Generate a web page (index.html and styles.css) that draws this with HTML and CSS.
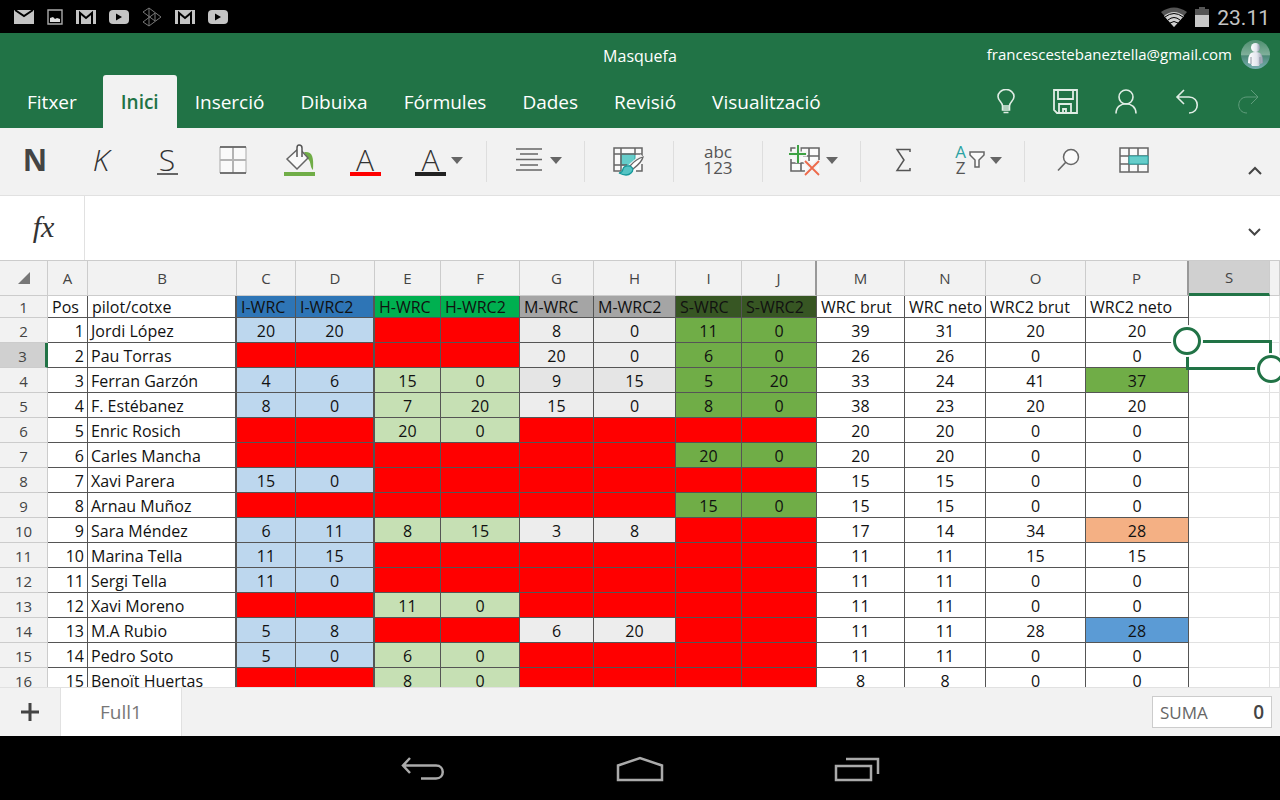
FILE: index.html
```html
<!DOCTYPE html>
<html lang="ca">
<head>
<meta charset="utf-8">
<meta name="viewport" content="width=device-width, initial-scale=1">
<title>Masquefa</title>
<link rel="stylesheet" href="styles.css">
</head>
<body>
<div class="status">
  <div class="notices">
    <svg width="20" height="16" viewBox="0 0 20 16"><path fill="#c4c4c4" d="M0 1h20v14H0z"/><path d="M1 1l9 6 9-6" fill="none" stroke="#000" stroke-width="2"/></svg>
    <svg width="16" height="16" viewBox="0 0 16 16"><path d="M1 1h14v14H1z" fill="none" stroke="#aaa" stroke-width="1.4"/><path d="M3 13V9l3-1 2 2 2-1 3 1v3z" fill="#ddd"/></svg>
    <svg width="20" height="16" viewBox="0 0 20 16"><path fill="#c4c4c4" d="M0 1h20v14H0z"/><path d="M4 15V4l6 5 6-5v11" fill="none" stroke="#000" stroke-width="2"/></svg>
    <svg width="20" height="16" viewBox="0 0 20 16"><rect y="1" width="20" height="14" rx="4" fill="#c4c4c4"/><path d="M7 4.500l6 3.500-6 3.500z" fill="#000"/></svg>
    <svg width="20" height="20" viewBox="0 0 20 20"><path d="M1 5l6-4 12 9-12 9-6-4 12-9v8L1 5M7 1v18" fill="none" stroke="#777"/></svg>
    <svg width="20" height="16" viewBox="0 0 20 16"><path fill="#c4c4c4" d="M0 1h20v14H0z"/><path d="M4 15V4l6 5 6-5v11" fill="none" stroke="#000" stroke-width="2"/></svg>
    <svg width="20" height="16" viewBox="0 0 20 16"><rect y="1" width="20" height="14" rx="4" fill="#c4c4c4"/><path d="M7 4.500l6 3.500-6 3.500z" fill="#000"/></svg>
  </div>
  <div class="system">
    <svg width="26" height="20" viewBox="0 0 26 20"><path d="M0 5Q13-4 26 5L13 20z" fill="#555"/><path d="M3 9Q13 1 23 9L13 20z" fill="#d0d0d0"/><path d="M4 10q9-7 18 0M7 13q6-5 12 0M9 16q4-3 8 0" fill="none" stroke="#000" stroke-width="1"/></svg>
    <svg width="14" height="20" viewBox="0 0 14 20"><path d="M0 2h4V0h6v2h4v7H0z" fill="#555"/><path d="M0 8h14v12H0z" fill="#c8c8c8"/></svg>
    <span class="clock">23.11</span>
  </div>
</div>

<header class="header">
  <div class="title-row">
    <h1 class="title">Masquefa</h1>
    <div class="account"><span>francescestebaneztella@gmail.com</span>
      <svg width="29" height="29" viewBox="0 0 29 29"><defs><linearGradient id="sky" x2="0" y2="1"><stop stop-color="#4f8f70"/><stop offset=".5" stop-color="#7faf9a"/><stop offset=".55" stop-color="#4d8a78"/><stop offset="1" stop-color="#79aeb2"/></linearGradient><linearGradient id="body"><stop stop-color="#fff"/><stop offset=".6" stop-color="#e3e6ee"/><stop offset="1" stop-color="#8d95a8"/></linearGradient></defs><circle cx="14.500" cy="14.500" r="14.500" fill="url(#sky)"/><circle cx="14.500" cy="7.500" r="4.500" fill="url(#body)"/><path d="M10 13q4.500-2 9 0 3 2 3 10l-3 1-1 2h-7l-1-2-3-1q0-8 3-10z" fill="url(#body)"/><path d="M10 17v7M19 17v7" stroke="#8b93a0"/></svg>
    </div>
  </div>
  <div class="tab-row">
    <nav class="tabs">
      <button class="tab file">Fitxer</button><button class="tab active">Inici</button><button class="tab">Inserció</button><button class="tab">Dibuixa</button><button class="tab">Fórmules</button><button class="tab">Dades</button><button class="tab">Revisió</button><button class="tab">Visualització</button>
    </nav>
    <div class="quick">
      <button aria-label="Ajuda"><svg width="26" height="26" viewBox="0 0 26 26"><path d="M10.500 17c0-4-4.500-5-4.500-9.500a8 7 0 0 1 16 0c0 4.500-4.500 5.500-4.500 9.500zM10.500 17v4h7v-4M10.500 19h7M11.500 23.500h5"/></svg></button>
      <button aria-label="Desa"><svg width="26" height="26" viewBox="0 0 26 26"><path d="M1 1h23v23H4l-3-3zM5 1v9h15V1M6 24v-9h12v9M10 24v-4h3v4" stroke-width="1.800"/></svg></button>
      <button aria-label="Comparteix"><svg width="26" height="26" viewBox="0 0 26 26"><circle cx="12" cy="8" r="7"/><path d="M2 24.500c0-13 20-13 20 0"/></svg></button>
      <button aria-label="Desfés"><svg width="26" height="26" viewBox="0 0 26 26"><path d="M9 1L2 8l7 7M2 8h12c11 0 11 16 0 16"/></svg></button>
      <button aria-label="Refés" disabled><svg width="26" height="26" viewBox="0 0 26 26"><path d="M15 1l7 7-7 7M22 8H11c-11 0-11 16 0 16"/></svg></button>
    </div>
  </div>
</header>

<div class="ribbon">
  <button class="tool"><b class="letter bold">N</b></button>
  <button class="tool"><i class="letter">K</i></button>
  <button class="tool"><span class="letter under">S</span></button>
  <button class="tool" aria-label="Vores"><svg width="28" height="28" viewBox="0 0 28 28"><path d="M1 1h26v26H1z" fill="#fafafa" stroke="#aaa"/><path d="M14 1v26M1 14h26" stroke="#b4b4b4" stroke-width="2"/><path d="M1 1h26M1 27h26" stroke="#555" stroke-width="1.500"/></svg></button>
  <button class="tool" aria-label="Color d'emplenament"><svg width="31" height="32" viewBox="0 0 31 32"><path d="M20 8c8-1 10 4 9 18-3-2-2-9-5-11z" fill="#70ad47"/><path d="M3 15L15 4l9 10-11 11z" fill="#fafafa" stroke="#666" stroke-width="1.500"/><path d="M13 13V4q0-3 2-3 3 0 3 3v9" fill="#fafafa" stroke="#555" stroke-width="1.500"/><path d="M0 28h31v4H0z" fill="#70ad47"/></svg></button>
  <button class="tool"><span class="letter colored red">A</span></button>
  <button class="tool split font"><span class="letter colored">A</span><svg class="caret" width="12" height="7"><path d="M0 0h12L6 7z"/></svg></button>
  <span class="sep"></span>
  <button class="tool split wide" aria-label="Alineació"><svg width="32" height="26" viewBox="0 0 32 26"><path d="M3 2h26M7 7h18M3 12.500h26M7 18h18M3 23h26" stroke="#666" stroke-width="1.600"/></svg><svg class="caret" width="12" height="7"><path d="M0 0h12L6 7z"/></svg></button>
  <span class="sep"></span>
  <button class="tool single" aria-label="Estils"><svg width="32" height="32" viewBox="0 0 32 32"><path d="M1 4h28v23H1z" fill="#fafafa"/><path d="M8 10h14v11H8z" fill="#65cdca" stroke="#2ba3a3"/><path d="M29 12V4H1v23h7M8 4v23M22 4v7M1 10h28M1 21h13M23 27h6v-7" fill="none" stroke="#666" stroke-width="1.500"/><path d="M30 13L16 25" stroke="#f2f2f2" stroke-width="7"/><path d="M30 13q-1 5-10 12l-3-3Q23 15 30 13z" fill="#fff" stroke="#666" stroke-width="1.300"/><path d="M17 22q-6-1-7 3-1 4-4 4 8 4 12 0 4-4-1-7z" fill="#55c4c4" stroke="#16999b" stroke-width="1.300"/></svg></button>
  <span class="sep"></span>
  <button class="tool single stack"><span>abc</span><span>123</span></button>
  <span class="sep"></span>
  <button class="tool split wide" aria-label="Insereix i suprimeix"><svg width="32" height="32" viewBox="0 0 32 32"><path d="M2 4h28v23H2z" fill="#fafafa"/><path d="M2 9V4h28v12M2 15v12h14M20 4v13M12 4v5M14 12h16M2 19h14M12 19v8" fill="none" stroke="#666" stroke-width="1.600"/><path d="M0 10h18M9 1v18" stroke="#f2f2f2" stroke-width="5"/><path d="M16 17l14 14M30 17L16 31" stroke="#f2f2f2" stroke-width="5"/><path d="M0 10h17M9 1v18" stroke="#3da243" stroke-width="2"/><path d="M16 17l14 14M30 17L16 31" stroke="#ed6a4b" stroke-width="1.800"/></svg><svg class="caret" width="12" height="7"><path d="M0 0h12L6 7z"/></svg></button>
  <span class="sep"></span>
  <button class="tool sum" aria-label="Suma automàtica"><svg width="16" height="24" viewBox="0 0 16 24"><path d="M15 4V1.500H2L9 12 2 22.500h13V20" fill="none" stroke="#555" stroke-width="1.500"/></svg></button>
  <button class="tool split sort"><span class="az"><em>A</em><span>Z</span></span><svg width="16" height="18" viewBox="0 0 16 18"><path d="M1 1h14v3l-5 5v7H6V9L1 4z" fill="#fafafa" stroke="#666" stroke-width="1.500"/></svg><svg class="caret" width="12" height="7"><path d="M0 0h12L6 7z"/></svg></button>
  <span class="sep"></span>
  <button class="tool find" aria-label="Cerca"><svg width="24" height="24" viewBox="0 0 24 24"><circle cx="15" cy="9" r="7.500" fill="#fafafa" stroke="#666" stroke-width="1.500"/><path d="M10 14l-8 8.500" stroke="#666" stroke-width="1.600"/></svg></button>
  <button class="tool cells" aria-label="Cel·les"><svg width="30" height="26" viewBox="0 0 30 26"><path d="M1 1h28v24H1z" fill="#fafafa"/><path d="M1 1h28v24H1zM10 1v24M19 1v24M1 9h28M1 17h28" fill="none" stroke="#666" stroke-width="1.500"/><path d="M10 9h19v8H10z" fill="#65cdca" stroke="#2ba3a3"/></svg></button>
  <button class="collapse" aria-label="Redueix"><svg width="14" height="9" viewBox="0 0 14 9"><path d="M1 8l6-6 6 6" fill="none" stroke="#444" stroke-width="2"/></svg></button>
</div>

<div class="formula">
  <label class="fx" for="formula">fx</label>
  <input id="formula" type="text">
  <button class="expand" aria-label="Expandeix"><svg width="13" height="8" viewBox="0 0 13 8"><path d="M1 1l5.500 5.500L12 1" fill="none" stroke="#444" stroke-width="2"/></svg></button>
</div>

<main class="sheet">
<table class="grid">
<colgroup><col class="w48"><col class="w40"><col class="w149"><col class="w59"><col class="w79"><col class="w66"><col class="w79"><col class="w74"><col class="w82"><col class="w66"><col class="w75"><col class="w88"><col class="w81"><col class="w100"><col class="w103"><col class="w81"><col></colgroup>
<thead><tr><th><svg width="12" height="12"><path d="M12 0v12H0z" fill="#777"/></svg></th><th>A</th><th>B</th><th>C</th><th>D</th><th>E</th><th>F</th><th>G</th><th>H</th><th>I</th><th class="hidden-after">J</th><th>M</th><th>N</th><th>O</th><th class="hidden-after">P</th><th class="current">S</th><th></th></tr></thead>
<tbody>
<tr class="names"><th>1</th><td>Pos</td><td>pilot/cotxe</td><td>I-WRC</td><td>I-WRC2</td><td>H-WRC</td><td>H-WRC2</td><td>M-WRC</td><td>M-WRC2</td><td>S-WRC</td><td>S-WRC2</td><td>WRC brut</td><td>WRC neto</td><td>WRC2 brut</td><td>WRC2 neto</td><td></td><td></td></tr>
<tr><th>2</th><td>1</td><td>Jordi López</td><td>20</td><td>20</td><td></td><td></td><td>8</td><td>0</td><td>11</td><td>0</td><td>39</td><td>31</td><td>20</td><td>20</td><td></td><td></td></tr>
<tr><th class="current">3</th><td>2</td><td>Pau Torras</td><td></td><td></td><td></td><td></td><td>20</td><td>0</td><td>6</td><td>0</td><td>26</td><td>26</td><td>0</td><td>0</td><td class="selected"><div class="selection"><i class="handle start"></i><i class="handle end"></i></div></td><td></td></tr>
<tr><th>4</th><td>3</td><td>Ferran Garzón</td><td>4</td><td>6</td><td>15</td><td>0</td><td class="shade">9</td><td class="shade">15</td><td>5</td><td>20</td><td>33</td><td>24</td><td>41</td><td class="first">37</td><td></td><td></td></tr>
<tr><th>5</th><td>4</td><td>F. Estébanez</td><td>8</td><td>0</td><td>7</td><td>20</td><td>15</td><td>0</td><td>8</td><td>0</td><td>38</td><td>23</td><td>20</td><td>20</td><td></td><td></td></tr>
<tr><th>6</th><td>5</td><td>Enric Rosich</td><td></td><td></td><td>20</td><td>0</td><td></td><td></td><td></td><td></td><td>20</td><td>20</td><td>0</td><td>0</td><td></td><td></td></tr>
<tr><th>7</th><td>6</td><td>Carles Mancha</td><td></td><td></td><td></td><td></td><td></td><td></td><td>20</td><td>0</td><td>20</td><td>20</td><td>0</td><td>0</td><td></td><td></td></tr>
<tr><th>8</th><td>7</td><td>Xavi Parera</td><td>15</td><td>0</td><td></td><td></td><td></td><td></td><td></td><td></td><td>15</td><td>15</td><td>0</td><td>0</td><td></td><td></td></tr>
<tr><th>9</th><td>8</td><td>Arnau Muñoz</td><td></td><td></td><td></td><td></td><td></td><td></td><td>15</td><td>0</td><td>15</td><td>15</td><td>0</td><td>0</td><td></td><td></td></tr>
<tr><th>10</th><td>9</td><td>Sara Méndez</td><td>6</td><td>11</td><td>8</td><td>15</td><td>3</td><td>8</td><td></td><td></td><td>17</td><td>14</td><td>34</td><td class="third">28</td><td></td><td></td></tr>
<tr><th>11</th><td>10</td><td>Marina Tella</td><td>11</td><td>15</td><td></td><td></td><td></td><td></td><td></td><td></td><td>11</td><td>11</td><td>15</td><td>15</td><td></td><td></td></tr>
<tr><th>12</th><td>11</td><td>Sergi Tella</td><td>11</td><td>0</td><td></td><td></td><td></td><td></td><td></td><td></td><td>11</td><td>11</td><td>0</td><td>0</td><td></td><td></td></tr>
<tr><th>13</th><td>12</td><td>Xavi Moreno</td><td></td><td></td><td>11</td><td>0</td><td></td><td></td><td></td><td></td><td>11</td><td>11</td><td>0</td><td>0</td><td></td><td></td></tr>
<tr><th>14</th><td>13</td><td>M.A Rubio</td><td>5</td><td>8</td><td></td><td></td><td>6</td><td>20</td><td></td><td></td><td>11</td><td>11</td><td>28</td><td class="second">28</td><td></td><td></td></tr>
<tr><th>15</th><td>14</td><td>Pedro Soto</td><td>5</td><td>0</td><td>6</td><td>0</td><td></td><td></td><td></td><td></td><td>11</td><td>11</td><td>0</td><td>0</td><td></td><td></td></tr>
<tr><th>16</th><td>15</td><td>Benoït Huertas</td><td></td><td></td><td>8</td><td>0</td><td></td><td></td><td></td><td></td><td>8</td><td>8</td><td>0</td><td>0</td><td></td><td></td></tr>
</tbody>
</table>
</main>

<footer class="bottom">
  <button class="add" aria-label="Full nou"><svg width="18" height="18" viewBox="0 0 18 18"><path d="M9 0v18M0 9h18" stroke="#444" stroke-width="3"/></svg></button>
  <button class="sheet-tab">Full1</button>
  <button class="total"><span>SUMA</span><b>0</b></button>
</footer>

<nav class="android">
  <button aria-label="Enrere"><svg width="44" height="26" viewBox="0 0 44 26"><path d="M9 2L2 9.500 9 17M2 9.500h33c9 0 9 13 0 13H20" fill="none" stroke="#aaa" stroke-width="2.500"/></svg></button>
  <button aria-label="Inici"><svg width="48" height="26" viewBox="0 0 48 26"><path d="M2 9.500L24 2l22 7.500V24H2z" fill="none" stroke="#aaa" stroke-width="2.500"/></svg></button>
  <button aria-label="Recents"><svg width="46" height="26" viewBox="0 0 46 26"><path d="M2 10h35v14H2zM12 3h32v15" fill="none" stroke="#aaa" stroke-width="2.500"/></svg></button>
</nav>
</body>
</html>
```
FILE: styles.css
```css
* { box-sizing: border-box; }
body {
  margin: 0;
  height: 100vh;
  display: flex;
  flex-direction: column;
  overflow: hidden;
  background: #fff;
  font-family: "Open Sans", "Noto Sans", sans-serif;
}
button {
  margin: 0;
  padding: 0;
  border: 0;
  background: none;
  color: inherit;
  font: inherit;
}
svg { display: block; flex: none; }

.status {
  flex: none;
  height: 33px;
  padding: 0 10px 0 14px;
  display: flex;
  align-items: center;
  justify-content: space-between;
  background: #000;
}
.notices { display: flex; align-items: center; gap: 13px; }
.system { display: flex; align-items: center; gap: 8px; }
.clock { color: #c4c4c4; font: 21px/32px Roboto, sans-serif; padding-top: 2px; }

.header { flex: none; background: #217346; color: #fff; }
.title-row {
  height: 42px;
  padding: 0 10px;
  display: grid;
  grid-template-columns: 1fr auto 1fr;
  align-items: center;
}
.title { grid-column: 2; margin: 0; padding-top: 4px; font-size: 16px; font-weight: 400; }
.account {
  display: flex;
  align-items: center;
  justify-content: flex-end;
  gap: 9px;
  font-size: 15px;
}
.tab-row { display: flex; justify-content: space-between; }
.tabs { display: flex; padding-left: 9px; }
.tab { height: 53px; padding: 0 18px; font-size: 19px; }
.tab.file { margin-right: 8px; }
.tab.active {
  border-radius: 3px 3px 0 0;
  background: #f2f2f2;
  color: #217346;
  font-weight: 600;
}
.quick { display: flex; padding-right: 1px; }
.quick button { width: 61px; display: flex; align-items: center; justify-content: center; }
.quick svg { fill: none; stroke: #e0ede5; stroke-width: 1.6px; }
.quick button:disabled svg { stroke: #5f9c7b; stroke-width: 1px; }

.ribbon {
  flex: none;
  height: 68px;
  padding-left: 2px;
  display: flex;
  background: #f2f2f2;
  border-bottom: 1px solid #e1e1e1;
  color: #555;
}
.tool {
  width: 66px;
  height: 64px;
  flex: none;
  display: flex;
  align-items: center;
  justify-content: center;
}
.letter {
  height: 32px;
  color: #333;
  font: 300 30px/31px "Open Sans", sans-serif;
  text-align: center;
}
i.letter { font-style: italic; }
.letter.bold { font-weight: 700; color: #444; }
.letter.under { width: 21px; height: 30px; border-bottom: 2px solid #666; line-height: 29px; }
.letter.colored { width: 31px; border-bottom: 4px solid #222; }
.letter.red { border-color: #f00; }
.split { gap: 5px; justify-content: flex-start; }
.caret { fill: #666; }
.font { width: 88px; padding-left: 17px; }
.wide { width: 97px; padding-left: 26px; }
.single { width: 88px; }
.stack { flex-direction: column; font-size: 17px; line-height: 16px; }
.sum { width: 84px; }
.sort { width: 79px; padding-left: 10px; gap: 3px; }
.sort .caret { margin-left: 2px; }
.az { width: 11px; font-size: 17px; line-height: 16px; }
.az em, .az span { display: block; font-style: normal; }
.az em { color: #2ba3a3; }
.find { width: 85px; }
.cells { width: 47px; }
.sep { width: 1px; height: 41px; margin-top: 13px; background: #dedede; }
.collapse { margin-left: auto; width: 50px; padding-top: 18px; display: flex; align-items: center; justify-content: center; }

.formula { flex: none; height: 64px; display: flex; background: #fff; }
.fx {
  width: 85px;
  padding-left: 3px;
  border-right: 1px solid #e1e1e1;
  color: #333;
  font: italic 30px/62px "Liberation Serif", serif;
  text-align: center;
}
.formula input { flex: 1; min-width: 0; border: 0; outline: 0; font-size: 18px; }
.expand { width: 52px; padding-top: 8px; display: flex; align-items: center; justify-content: center; }

.sheet { flex: 1; min-height: 0; overflow: hidden; border-top: 1px solid #ccc; }
.grid {
  width: 100%;
  table-layout: fixed;
  border-collapse: separate;
  border-spacing: 0;
  font: 16px/20px "Open Sans", sans-serif;
  color: #111;
}
.w40 { width: 40px; } .w48 { width: 48px; } .w59 { width: 59px; }
.w66 { width: 66px; } .w74 { width: 74px; } .w75 { width: 75px; }
.w79 { width: 79px; } .w81 { width: 81px; } .w82 { width: 82px; }
.w88 { width: 88px; } .w100 { width: 100px; } .w103 { width: 103px; }
.w149 { width: 149px; }
.grid th, .grid td {
  height: 25px;
  padding: 2px 0 0;
  border: 0 solid #555;
  border-width: 0 1px 1px 0;
  text-align: center;
  white-space: nowrap;
}
.grid th {
  background: #f2f2f2;
  border-color: #ccc;
  color: #444;
  font-size: 15px;
  font-weight: 400;
}
.grid thead th { height: 35px; padding: 0; }
.grid thead svg { margin: 0 auto; }
.grid thead .hidden-after { border-right: 2px solid #999; }
.grid thead .current { background: #d0d0d0; border-bottom: 3px solid #217346; }
.grid tbody .current { background: #d0d0d0; border-right: 3px solid #217346; }
.grid td:nth-child(2) { padding-right: 3px; text-align: right; }
.grid td:nth-child(3) { padding-left: 3px; text-align: left; }
.grid td:nth-child(3), .grid td:nth-child(5) { border-right-width: 2px; }
.grid td:nth-child(4), .grid td:nth-child(5) { background: #bdd7ee; }
.grid td:nth-child(6), .grid td:nth-child(7) { background: #c6e0b4; }
.grid td:nth-child(8), .grid td:nth-child(9) { background: #ededed; }
.grid td:nth-child(10), .grid td:nth-child(11) { background: #70ad47; }
.grid td:empty { background: #f00; }
.grid td:nth-child(n+16) { background: #fff; border-color: #e1e1e1; }
.grid td.shade { background: #e5e5e5; }
.grid td.first { background: #70ad47; }
.grid td.second { background: #5b9bd5; }
.grid td.third { background: #f4b084; }
.grid .names th, .grid .names td { height: 22px; padding-top: 0; line-height: 18px; }
.grid .names td { padding-left: 4px; text-align: left; }
.grid .names td:nth-child(4), .grid .names td:nth-child(5) { background: #2e75b6; }
.grid .names td:nth-child(6), .grid .names td:nth-child(7) { background: #00b050; }
.grid .names td:nth-child(8), .grid .names td:nth-child(9) { background: #a5a5a5; }
.grid .names td:nth-child(10), .grid .names td:nth-child(11) { background: #375623; }

.selected { position: relative; }
.selection { position: absolute; inset: -3px; border: 3px solid #217346; z-index: 1; }
.handle {
  position: absolute;
  width: 28px;
  height: 28px;
  border: 3px solid #217346;
  border-radius: 50%;
  background: #fff;
  box-shadow: 0 0 0 2px #fff;
}
.handle.start { left: -16px; top: -16px; }
.handle.end { right: -16px; bottom: -16px; }

.bottom {
  flex: none;
  height: 49px;
  display: flex;
  background: #f2f2f2;
  border-top: 1px solid #e1e1e1;
}
.add { width: 60px; display: flex; align-items: center; justify-content: center; }
.sheet-tab {
  width: 122px;
  border: 0 solid #e1e1e1;
  border-width: 0 1px;
  background: #fff;
  color: #777;
  font-size: 19px;
}
.total {
  width: 120px;
  height: 32px;
  margin: 8px 8px 0 auto;
  padding: 0 7px;
  display: flex;
  align-items: center;
  justify-content: space-between;
  background: #fff;
  border: 1px solid #ccc;
  color: #666;
  font-size: 17px;
}
.total b { color: #444; font-size: 19px; font-weight: 600; }

.android {
  flex: none;
  height: 64px;
  display: flex;
  justify-content: center;
  background: #000;
}
.android button { width: 217px; padding-top: 2px; display: flex; align-items: center; justify-content: center; }
```
